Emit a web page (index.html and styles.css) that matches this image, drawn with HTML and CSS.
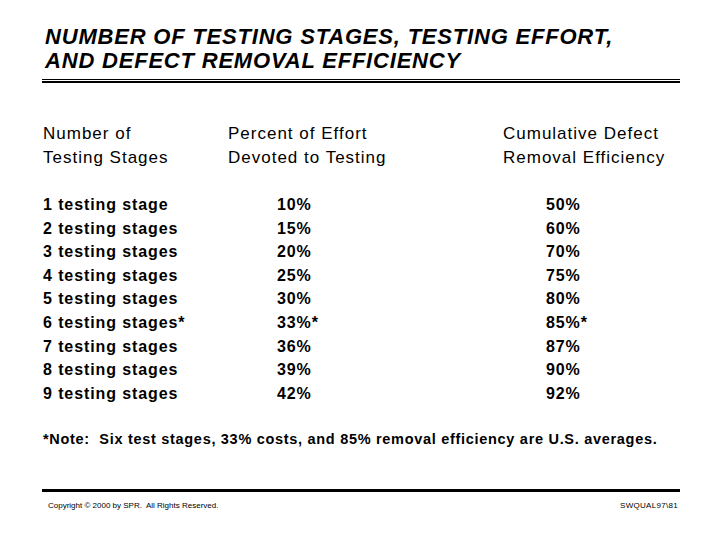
FILE: index.html
```html
<!DOCTYPE html>
<html>
<head>
<meta charset="utf-8">
<link rel="stylesheet" href="styles.css">
</head>
<body>
<div class="slide">
  <div class="title">NUMBER OF TESTING STAGES, TESTING EFFORT,<br>AND DEFECT REMOVAL EFFICIENCY</div>
  <div class="rule-double"></div>
  <div class="table">
    <div class="head c1">Number of<br>Testing Stages</div>
    <div class="head c2">Percent of Effort<br>Devoted to Testing</div>
    <div class="head c3">Cumulative Defect<br>Removal Efficiency</div>
    <div class="data c1">1 testing stage<br>2 testing stages<br>3 testing stages<br>4 testing stages<br>5 testing stages<br>6 testing stages*<br>7 testing stages<br>8 testing stages<br>9 testing stages</div>
    <div class="data c2 pct">10%<br>15%<br>20%<br>25%<br>30%<br>33%*<br>36%<br>39%<br>42%</div>
    <div class="data c3 eff">50%<br>60%<br>70%<br>75%<br>80%<br>85%*<br>87%<br>90%<br>92%</div>
  </div>
  <div class="note">*Note:&nbsp; Six test stages, 33% costs, and 85% removal efficiency are U.S. averages.</div>
  <div class="footer">
    <div class="rule-thick"></div>
    <div class="foot-row">
      <span class="copy">Copyright © 2000 by SPR.&nbsp; All Rights Reserved.</span>
      <span class="code">SWQUAL97\81</span>
    </div>
  </div>
</div>
</body>
</html>
```
FILE: styles.css
```css
html, body {
  margin: 0;
  padding: 0;
  background: #fff;
}
body {
  width: 719px;
  height: 539px;
  overflow: hidden;
  font-family: "Liberation Sans", Arial, sans-serif;
  color: #000;
}
.slide {
  padding: 25px 39px 0 42px;
}
.title {
  font-weight: bold;
  font-style: italic;
  font-size: 22px;
  line-height: 24px;
  padding-left: 3px;
  letter-spacing: 0.8px;
}
.rule-double {
  margin-top: 6px;
  height: 1px;
  border-top: 1px solid #000;
  border-bottom: 2px solid #000;
}
.table {
  display: grid;
  grid-template-columns: 185px 275px 1fr;
  margin-top: 39px;
  padding-left: 1px;
}
.head {
  font-size: 17px;
  line-height: 24px;
  letter-spacing: 1px;
}
.data {
  margin-top: 23px;
  font-size: 16px;
  font-weight: bold;
  line-height: 23.6px;
  letter-spacing: 0.9px;
}
.pct {
  padding-left: 49px;
}
.eff {
  padding-left: 43px;
}
.note {
  margin-top: 26px;
  padding-left: 1px;
  font-size: 14.5px;
  font-weight: bold;
  letter-spacing: 0.7px;
}
.footer {
  margin-top: 42px;
}
.rule-thick {
  height: 3px;
  background: #000;
}
.foot-row {
  display: flex;
  justify-content: space-between;
  padding: 9px 0 0 6px;
  font-size: 8px;
}
.code {
  padding-right: 2px;
  letter-spacing: 0.3px;
}
```
